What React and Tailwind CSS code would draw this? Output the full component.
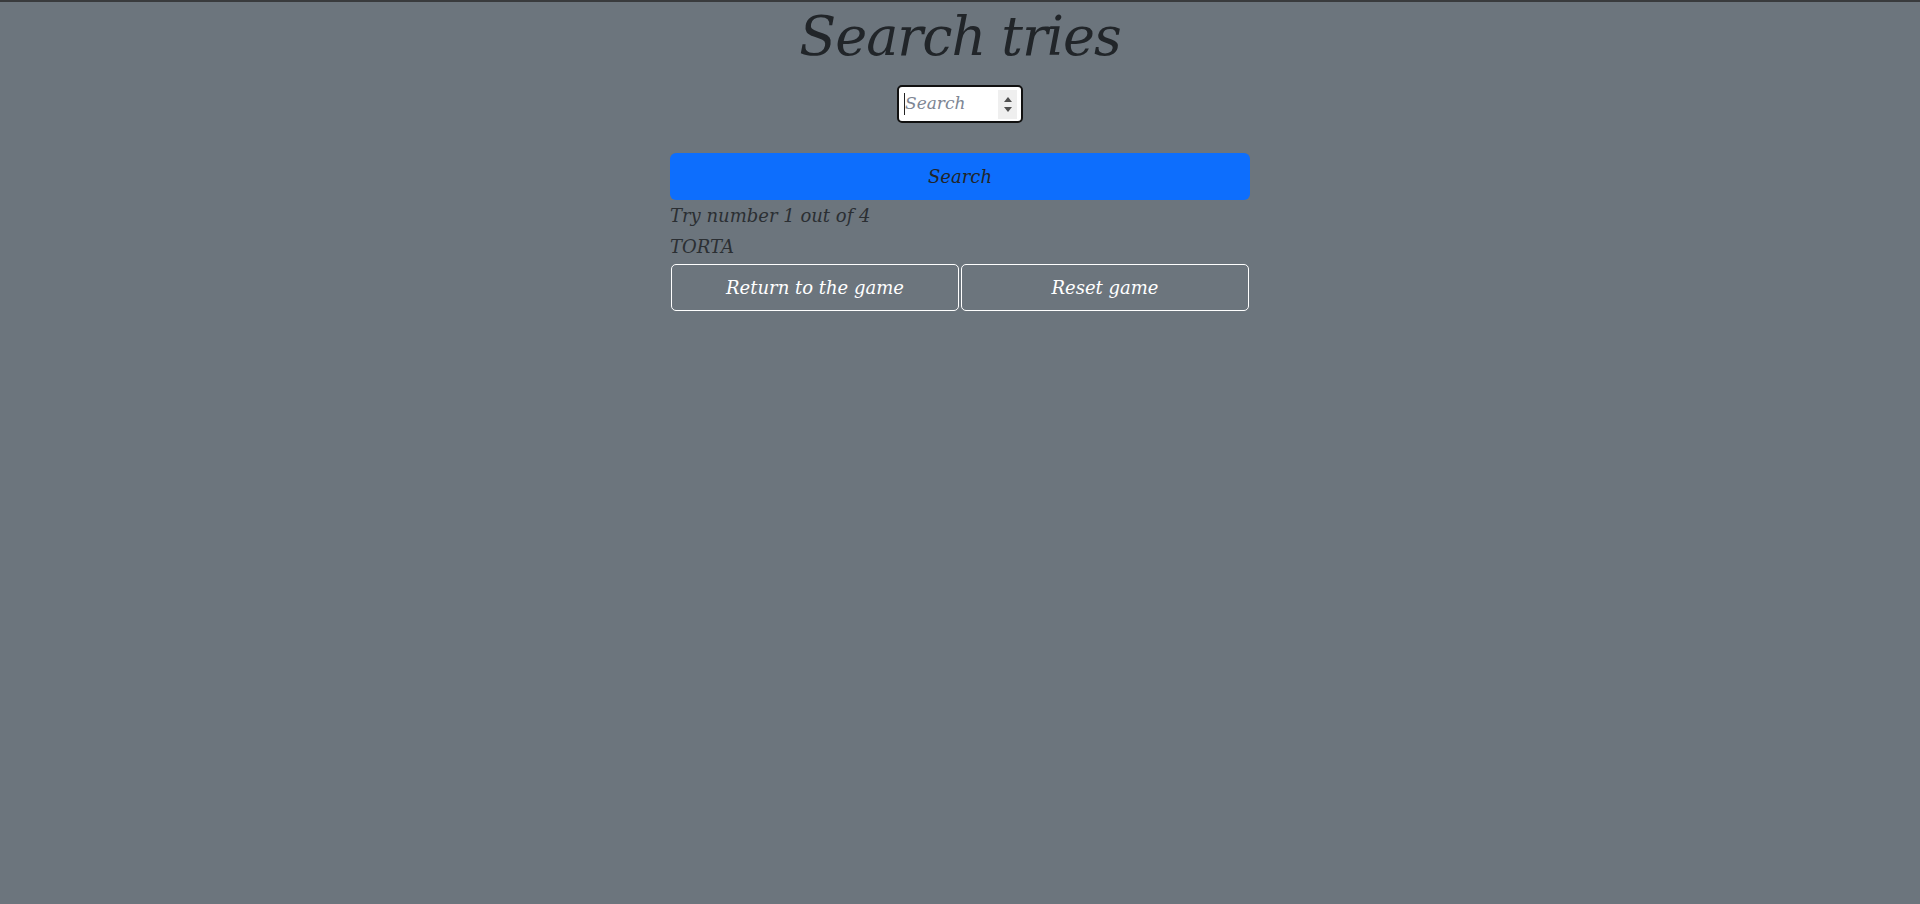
export default function App() {
    return (
        <div className="min-h-screen bg-[#6c757d] border-t-2 border-[#393b3d] italic text-[#212529]" style={{ fontFamily: '"DejaVu Serif", "Liberation Serif", serif' }}>
            <div className="w-[580px] mx-auto flex flex-col">
                <h1 className="pt-[3px] text-center text-[54px] leading-[64px] tracking-[-1px] font-normal">Search tries</h1>

                <div className="mt-4 self-center w-[126px] h-[38px] rounded-[5px] border-2 border-[#101010] bg-white p-px">
                    <div className="h-full flex items-center rounded-[3px] bg-white pl-[4px] pr-[3px]">
                        <div className="w-px h-[22px] bg-[#222]"></div>
                        <input
                            type="text"
                            placeholder="Search"
                            className="w-[90px] min-w-0 bg-transparent outline-none text-[17px] italic placeholder:text-[#7d8694]"
                        />
                        <div className="ml-auto w-[19px] h-[29px] bg-[#efefef] flex flex-col items-center justify-center gap-[5px]">
                            <svg width="8" height="5" viewBox="0 0 8 5"><path d="M4 0 L8 5 L0 5 Z" fill="#505050" /></svg>
                            <svg width="8" height="5" viewBox="0 0 8 5"><path d="M0 0 L8 0 L4 5 Z" fill="#505050" /></svg>
                        </div>
                    </div>
                </div>

                <button className="mt-[30px] h-[47px] w-full rounded-[6px] bg-[#0d6efd] text-[18px] italic text-[#212529]">
                    Search
                </button>

                <p className="text-[18px] leading-[31px] text-[#2b2f33]">Try number 1 out of 4</p>
                <p className="text-[18px] leading-[31px] text-[#2b2f33]">TORTA</p>

                <div className="mt-[2px] px-px grid grid-cols-2 gap-[2px]">
                    <button className="h-[47px] rounded-[5px] border border-white text-[18px] italic text-white">
                        Return to the game
                    </button>
                    <button className="h-[47px] rounded-[5px] border border-white text-[18px] italic text-white">
                        Reset game
                    </button>
                </div>
            </div>
        </div>
    );
}
